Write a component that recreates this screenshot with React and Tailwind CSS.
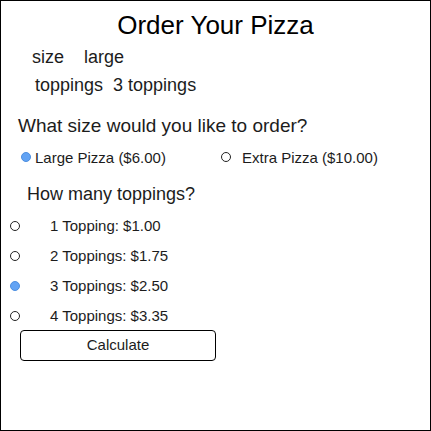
import { useState } from 'react';

const sizes = [
  { id: 'large', label: 'Large Pizza ($6.00)' },
  { id: 'extra', label: 'Extra Pizza ($10.00)' },
];

const toppings = [
  { id: 1, label: '1 Topping: $1.00' },
  { id: 2, label: '2 Toppings: $1.75' },
  { id: 3, label: '3 Toppings: $2.50' },
  { id: 4, label: '4 Toppings: $3.35' },
];

function Radio({ checked }) {
  return (
    <span
      className={
        checked
          ? 'block w-[10px] h-[10px] rounded-full bg-[#62a3f4] border border-[#4d8fe0]'
          : 'block w-[10px] h-[10px] rounded-full border border-[#222]'
      }
    />
  );
}

export default function App() {
  const [size, setSize] = useState('large');
  const [count, setCount] = useState(3);

  return (
    <div
      className="w-[431px] h-[431px] border border-black bg-white text-[#1c1c1c]"
      style={{ fontFamily: '"Liberation Sans", Arial, sans-serif' }}
    >
      <h1 className="pt-[9px] text-center text-[26px] leading-[30px] text-black">Order Your Pizza</h1>

      {/* current order */}
      <div className="mt-[3px] flex pl-[31px] text-[18px] leading-[28px]">
        <span>size</span>
        <span className="ml-[20px]">large</span>
      </div>
      <div className="flex pl-[34px] text-[18px] leading-[28px]">
        <span>toppings</span>
        <span className="ml-[10px]">3 toppings</span>
      </div>

      <p className="mt-[13px] pl-[17px] text-[19px] leading-[28px]">What size would you like to order?</p>
      <div className="mt-[8px] flex items-center text-[15px] leading-[20px]">
        {sizes.map((s) => (
          <label
            key={s.id}
            onClick={() => setSize(s.id)}
            className={s.id === 'large' ? 'flex items-center pl-[20px] w-[220px]' : 'flex items-center'}
          >
            <span className="mb-[2px]">
              <Radio checked={size === s.id} />
            </span>
            <span className={s.id === 'large' ? 'ml-[4px]' : 'ml-[11px]'}>{s.label}</span>
          </label>
        ))}
      </div>

      <p className="mt-[12px] pl-[26px] text-[18px] leading-[28px]">How many toppings?</p>
      <div className="mt-[3px] flex flex-col text-[15px] leading-[30px]">
        {toppings.map((t) => (
          <label key={t.id} onClick={() => setCount(t.id)} className="flex items-center pl-[9px]">
            <Radio checked={count === t.id} />
            <span className="ml-[30px]">{t.label}</span>
          </label>
        ))}
      </div>

      <button className="-mt-px ml-[19px] w-[196px] h-[31px] border border-black rounded-[4px] bg-white text-[15px] text-center">
        Calculate
      </button>
    </div>
  );
}
